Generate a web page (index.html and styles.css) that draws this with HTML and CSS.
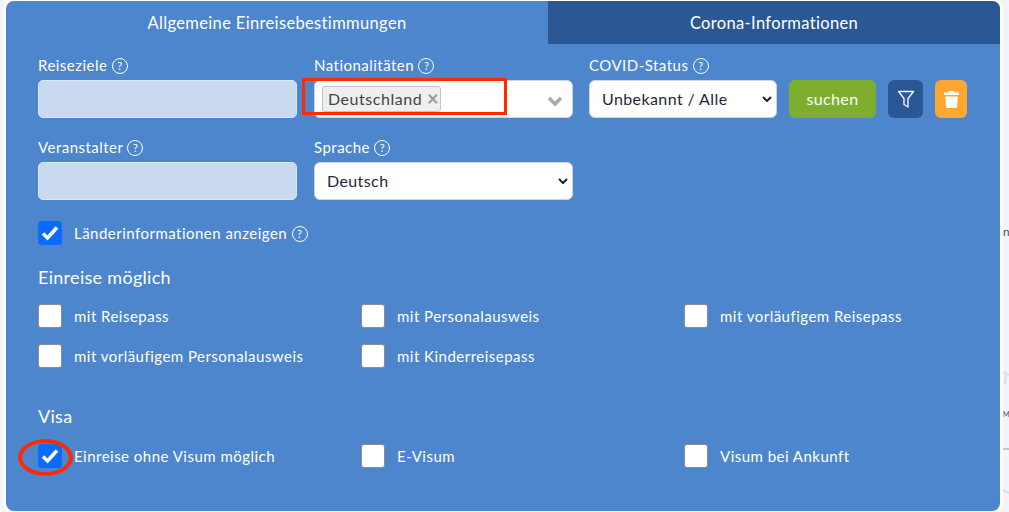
FILE: index.html
```html
<!DOCTYPE html>
<html lang="de">
<head>
    <meta charset="UTF-8">
    <title>Einreisebestimmungen</title>
    <link rel="stylesheet" href="styles.css">
</head>
<body>
    <svg class="peek-strip" width="6" height="512" viewBox="0 0 6 512"><path d="M0 372l6 3M3 375l-1 9M0 490l6 3" fill="none" stroke="#cfe0ef" stroke-width="2"/><path d="M0 449h6" stroke="#999"/></svg>
    <span class="peek peek-n">n</span>
    <span class="peek peek-m">M</span>
    <div class="panel">
        <div class="tabs">
            <div class="tab tab-active">Allgemeine Einreisebestimmungen</div>
            <div class="tab tab-other">Corona-Informationen</div>
        </div>
        <div class="form">
            <div class="search-row">
                <div class="field field-wide">
                    <label class="field-label">Reiseziele <span class="help">?</span></label>
                    <div class="text-input"></div>
                </div>
                <div class="field field-wide">
                    <label class="field-label">Nationalitäten <span class="help">?</span></label>
                    <div class="multi-select">
                        <span class="chip">Deutschland <span class="chip-x">&times;</span></span>
                        <svg class="multi-arrow" width="16" height="11" viewBox="0 0 16 11"><path d="M2 2l6 6 6-6" fill="none" stroke="#a9a9a9" stroke-width="3.5"/></svg>
                        <div class="mark-rect"></div>
                    </div>
                </div>
                <div class="field field-status">
                    <label class="field-label">COVID-Status <span class="help">?</span></label>
                    <div class="select-box">Unbekannt / Alle
                        <svg class="select-arrow" width="10" height="6" viewBox="0 0 10 6"><path d="M1 1l4 4 4-4" fill="none" stroke="#1b2233" stroke-width="2"/></svg>
                    </div>
                </div>
                <button class="btn btn-search">suchen</button>
                <button class="btn btn-filter">
                    <svg width="18" height="18" viewBox="0 0 18 18"><path d="M1.500 1.500h15l-5.500 7v8.500l-4-2.500v-6z" fill="none" stroke="#fff" stroke-width="1.300" stroke-linejoin="round"/></svg>
                </button>
                <button class="btn btn-trash">
                    <svg width="15" height="17" viewBox="0 0 15 17"><path d="M5 0h5l.8 1.500H15V4H0V1.500h4.200zM1.200 5.500h12.600l-.8 10.300a1.300 1.300 0 0 1-1.300 1.200H3.300A1.300 1.300 0 0 1 2 15.800z" fill="#fff"/></svg>
                </button>
            </div>
            <div class="second-row">
                <div class="field field-wide">
                    <label class="field-label">Veranstalter <span class="help">?</span></label>
                    <div class="text-input"></div>
                </div>
                <div class="field field-wide">
                    <label class="field-label">Sprache <span class="help">?</span></label>
                    <div class="select-box">Deutsch
                        <svg class="select-arrow" width="10" height="6" viewBox="0 0 10 6"><path d="M1 1l4 4 4-4" fill="none" stroke="#1b2233" stroke-width="2"/></svg>
                    </div>
                </div>
            </div>
            <div class="check-item info-check">
                <span class="box box-on"><svg width="18" height="16" viewBox="0 0 18 16"><path d="M2 8.500l4.500 4.500L16 2.500" fill="none" stroke="#fff" stroke-width="3.500"/></svg></span>
                <span>Länderinformationen anzeigen <span class="help">?</span></span>
            </div>
            <h3 class="group-title">Einreise möglich</h3>
            <div class="check-grid">
                <div class="check-item"><span class="box"></span><span>mit Reisepass</span></div>
                <div class="check-item"><span class="box"></span><span>mit Personalausweis</span></div>
                <div class="check-item"><span class="box"></span><span>mit vorläufigem Reisepass</span></div>
                <div class="check-item"><span class="box"></span><span>mit vorläufigem Personalausweis</span></div>
                <div class="check-item"><span class="box"></span><span>mit Kinderreisepass</span></div>
            </div>
            <h3 class="group-title visa-title">Visa</h3>
            <div class="check-grid">
                <div class="check-item">
                    <span class="box box-on"><svg width="18" height="16" viewBox="0 0 18 16"><path d="M2 8.500l4.500 4.500L16 2.500" fill="none" stroke="#fff" stroke-width="3.500"/></svg>
                        <span class="mark-ellipse"></span>
                    </span>
                    <span>Einreise ohne Visum möglich</span>
                </div>
                <div class="check-item"><span class="box"></span><span>E-Visum</span></div>
                <div class="check-item"><span class="box"></span><span>Visum bei Ankunft</span></div>
            </div>
        </div>
    </div>
</body>
</html>
```

FILE: styles.css
```css
html, body {
    height: 100%;
}

body {
    margin: 0;
    background-color: #f1f4f8;
    font-family: 'Lato', sans-serif;
    font-size: 15px;
    color: white;
    overflow: hidden;
}

/* bits of the page behind the dialog */
.peek-strip {
    position: absolute;
    left: 1003px;
    top: 0;
}

.peek {
    position: absolute;
    left: 1003px;
    color: #555;
    font-size: 12px;
}

.peek-n {
    top: 224px;
}

.peek-m {
    top: 410px;
    font-size: 7px;
}

.panel {
    position: relative;
    width: 994px;
    height: 510px;
    margin: 1px 0 0 6px;
    background-color: #4d86cc;
    border-radius: 8px;
    overflow: hidden;
    box-shadow: 0 0 0 3px #fff;
}

.tabs {
    display: flex;
    height: 43px;
}

.tab {
    display: flex;
    align-items: center;
    justify-content: center;
    font-size: 16.5px;
    letter-spacing: 0.35px;
}

.tab-active {
    width: 542px;
}

.tab-other {
    flex: 1;
    background-color: #2c5795;
}

.form {
    padding: 12px 32px 0;
}

.search-row, .second-row {
    display: flex;
    align-items: flex-end;
    gap: 17px;
}

.second-row {
    margin-top: 20px;
}

.field-label {
    display: block;
    height: 24px;
    line-height: 18px;
    letter-spacing: 0.48px;
}

.help {
    display: inline-block;
    width: 14px;
    height: 14px;
    line-height: 14px;
    border: 1px solid #fff;
    border-radius: 50%;
    font-size: 11px;
    text-align: center;
    letter-spacing: 0;
    vertical-align: 1px;
}

.field-wide {
    width: 259px;
}

.text-input {
    height: 36px;
    background-color: #c8d9f0;
    border: 1px solid #dbe6f5;
    border-radius: 5px;
}

.multi-select, .select-box {
    position: relative;
    box-sizing: border-box;
    height: 38px;
    background-color: white;
    border: 1px solid #ccd3dd;
    border-radius: 6px;
    color: #1f2738;
}

.chip {
    display: inline-block;
    box-sizing: border-box;
    width: 119px;
    height: 26px;
    margin: 5px 0 0 7px;
    padding-left: 5px;
    line-height: 24px;
    background-color: #efefef;
    border: 1px solid #c4c4c4;
    border-radius: 3px;
    color: #444;
    font-size: 16px;
    letter-spacing: 0.55px;
    white-space: nowrap;
}

.chip-x {
    color: #999;
    font-size: 20px;
    font-weight: bold;
    line-height: 20px;
    letter-spacing: 0;
    vertical-align: -1px;
}

.multi-arrow {
    position: absolute;
    right: 9px;
    top: 15px;
}

.mark-rect {
    position: absolute;
    left: -13px;
    top: -3px;
    width: 199px;
    height: 31px;
    border: 3px solid #ff2a00;
}

.select-box {
    display: flex;
    align-items: center;
    padding: 0 0 2px 12px;
    font-size: 16px;
    letter-spacing: 0.4px;
}

.select-arrow {
    position: absolute;
    right: 4px;
    top: 15px;
}

.field-status {
    width: 188px;
    margin: 0 -5px 0 -1px;
}

.btn {
    height: 38px;
    border: none;
    border-radius: 6px;
    color: white;
    font-family: inherit;
    font-size: 16px;
    letter-spacing: 0.35px;
    padding: 0;
}

.btn svg {
    display: block;
    margin: 0 auto;
}

.btn-search {
    width: 87px;
    padding-bottom: 2px;
    background-color: #7dae2e;
}

.btn-filter {
    width: 35px;
    margin-left: -5px;
    background-color: #2c5795;
}

.btn-trash {
    width: 32px;
    margin-left: -5px;
    background-color: #ffa733;
}

.check-item {
    display: flex;
    align-items: center;
    gap: 12px;
    height: 24px;
    letter-spacing: 0.48px;
}

.info-check {
    margin-top: 21px;
}

.box {
    position: relative;
    flex: none;
    display: flex;
    align-items: center;
    justify-content: center;
    box-sizing: border-box;
    width: 24px;
    height: 24px;
    background-color: white;
    border: 1px solid #8d8d8d;
    border-radius: 3px;
}

.box-on {
    background-color: #0a6cff;
    border-color: #0a6cff;
}

.mark-ellipse {
    position: absolute;
    left: -21px;
    top: -6px;
    width: 47px;
    height: 29px;
    border: 4px solid #ff2a00;
    border-radius: 50%;
}

.group-title {
    margin: 21px 0 16px;
    height: 22px;
    line-height: 22px;
    font-size: 18px;
    font-weight: normal;
    letter-spacing: 0.3px;
}

.visa-title {
    margin-top: 37px;
    margin-bottom: 17px;
}

.check-grid {
    display: grid;
    grid-template-columns: 323px 323px 1fr;
    row-gap: 16px;
}
```
